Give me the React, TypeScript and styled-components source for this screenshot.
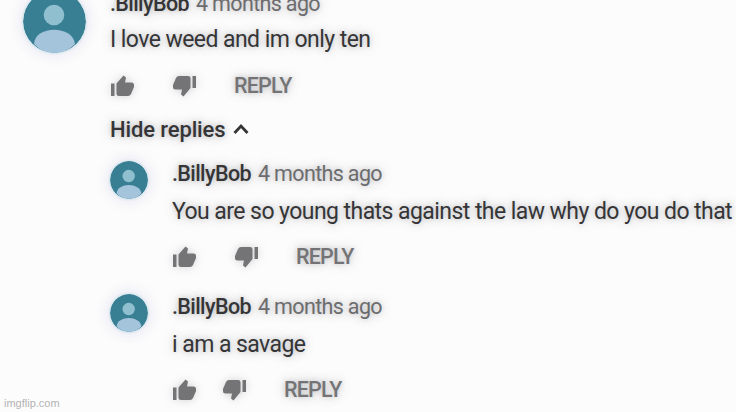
import type { ReactNode } from 'react';
import styled, { createGlobalStyle } from 'styled-components';

const GlobalStyle = createGlobalStyle`
  body {
    margin: 0;
    background: #fcfcfc;
    overflow: hidden;
  }
`;

const Page = styled.main`
  display: flex;
  flex-direction: column;
  justify-content: space-between;
  width: 736px;
  height: 412px;
  overflow: hidden;
  font-family: Roboto, 'Liberation Sans', sans-serif;
  color: #353537;
`;

const Thread = styled.section`
  height: 396px;
  margin-top: -14px;
  padding-left: 23px;
`;

const CommentRow = styled.article`
  display: flex;
  align-items: flex-start;
  gap: 24px;
`;

const AvatarSvg = styled.svg<{ $size: number; $top: number }>`
  flex: none;
  width: ${(p) => p.$size}px;
  height: ${(p) => p.$size}px;
  margin-top: ${(p) => p.$top}px;
  border-radius: 50%;
  box-shadow: 0 0 2px 1px #d3e6ee, 0 0 12px 5px #eeecf5;
`;

const Body = styled.div`
  flex: none;
  white-space: nowrap;
  text-shadow: 0 0 5px rgba(80, 80, 90, 0.22), 0 0 12px rgba(80, 80, 90, 0.3);
`;

const Header = styled.div`
  display: flex;
  gap: 7px;
  height: 35px;
  line-height: 35px;
  font-size: 21.5px;
`;

const Author = styled.span`
  width: 79px;
  font-weight: 500;
  letter-spacing: -0.6px;
`;

const Time = styled.span`
  color: #6c6c6e;
  letter-spacing: -0.65px;
`;

const Text = styled.p<{ $height: number; $drop: number }>`
  box-sizing: border-box;
  height: ${(p) => p.$height}px;
  margin: 0;
  padding-top: ${(p) => p.$drop}px;
  line-height: ${(p) => p.$height}px;
  font-size: 23px;
  letter-spacing: -0.56px;
`;

const Actions = styled.div<{ $height: number }>`
  display: flex;
  align-items: center;
  height: ${(p) => p.$height}px;
  color: #747476;
`;

const Thumb = styled.svg<{ $space: number }>`
  width: 25px;
  height: 23px;
  margin-right: ${(p) => p.$space}px;
  fill: currentColor;
  filter: drop-shadow(0 0 4px rgba(80, 80, 90, 0.25));
`;

const ReplyButton = styled.button`
  padding: 0;
  border: 0;
  background: none;
  color: inherit;
  font: 500 21.5px Roboto, 'Liberation Sans', sans-serif;
  letter-spacing: -0.8px;
  text-shadow: inherit;
`;

const HideReplies = styled.div`
  display: flex;
  align-items: center;
  gap: 8px;
  height: 30px;
  font-size: 22px;
  font-weight: 500;
  letter-spacing: -0.12px;
`;

const Chevron = styled.svg`
  width: 16px;
  height: 12px;
  fill: none;
  stroke: currentColor;
  stroke-width: 2.8;
`;

const Replies = styled.div`
  display: flex;
  flex-direction: column;
  gap: 5px;
  margin-top: 12px;
`;

const Watermark = styled.footer`
  padding: 0 0 2px 4px;
  font: 11px/14px 'Liberation Sans', Arial, sans-serif;
  color: #b3b3b3;
`;

function Avatar({ size, top }: { size: number; top: number }) {
  return (
    <AvatarSvg $size={size} $top={top} viewBox="0 0 63 63">
      <circle cx="31.5" cy="31.5" r="31.5" fill="#397f94" />
      <circle cx="31" cy="25" r="10.3" fill="#90c0cf" />
      <path d="M11 54C12 35 50 35 52 54Q44 63 31.5 63T11 54Z" fill="#a4c4dc" />
    </AvatarSvg>
  );
}

type CommentProps = {
  text: string;
  reply?: boolean;
  spaces: [number, number];
  children?: ReactNode;
};

function Comment({ text, reply, spaces, children }: CommentProps) {
  return (
    <CommentRow>
      <Avatar size={reply ? 38 : 63} top={reply ? 5 : 4} />
      <Body>
        <Header>
          <Author>.BillyBob</Author>
          <Time>4 months ago</Time>
        </Header>
        <Text $height={reply ? 38 : 36} $drop={reply ? 2 : 1}>{text}</Text>
        <Actions $height={reply ? 55 : 57}>
          <Thumb $space={spaces[0]} viewBox="0 0 25 23">
            <path d="M1 9.5H4.5V22H1ZM6.5 9.5L13.5 1.5L16 3.5L15 8.5H21.5Q24 8.5 24 11V13L21 20Q20 22 18 22H9Q6.5 22 6.5 20Z" />
          </Thumb>
          <Thumb $space={spaces[1]} viewBox="0 0 25 23">
            <path d="M24 2H20.5V14H24ZM18.5 14L11.5 22.5L9 20.5L10 15.5H3.5Q1 15.5 1 13V11L4 4Q5 2 7 2H16Q18.5 2 18.5 4Z" />
          </Thumb>
          <ReplyButton>REPLY</ReplyButton>
        </Actions>
        {children}
      </Body>
    </CommentRow>
  );
}

export default function App() {
  return (
    <>
      <GlobalStyle />
      <Page>
        <Thread>
          <Comment text="I love weed and im only ten" spaces={[37, 37]}>
            <HideReplies>
              Hide replies
              <Chevron viewBox="0 0 16 12">
                <path d="M1.5 10L8 3L14.5 10" />
              </Chevron>
            </HideReplies>
            <Replies>
              <Comment reply text="You are so young thats against the law why do you do that" spaces={[37, 37]} />
              <Comment reply text="i am a savage" spaces={[25, 37]} />
            </Replies>
          </Comment>
        </Thread>
        <Watermark>imgflip.com</Watermark>
      </Page>
    </>
  );
}
